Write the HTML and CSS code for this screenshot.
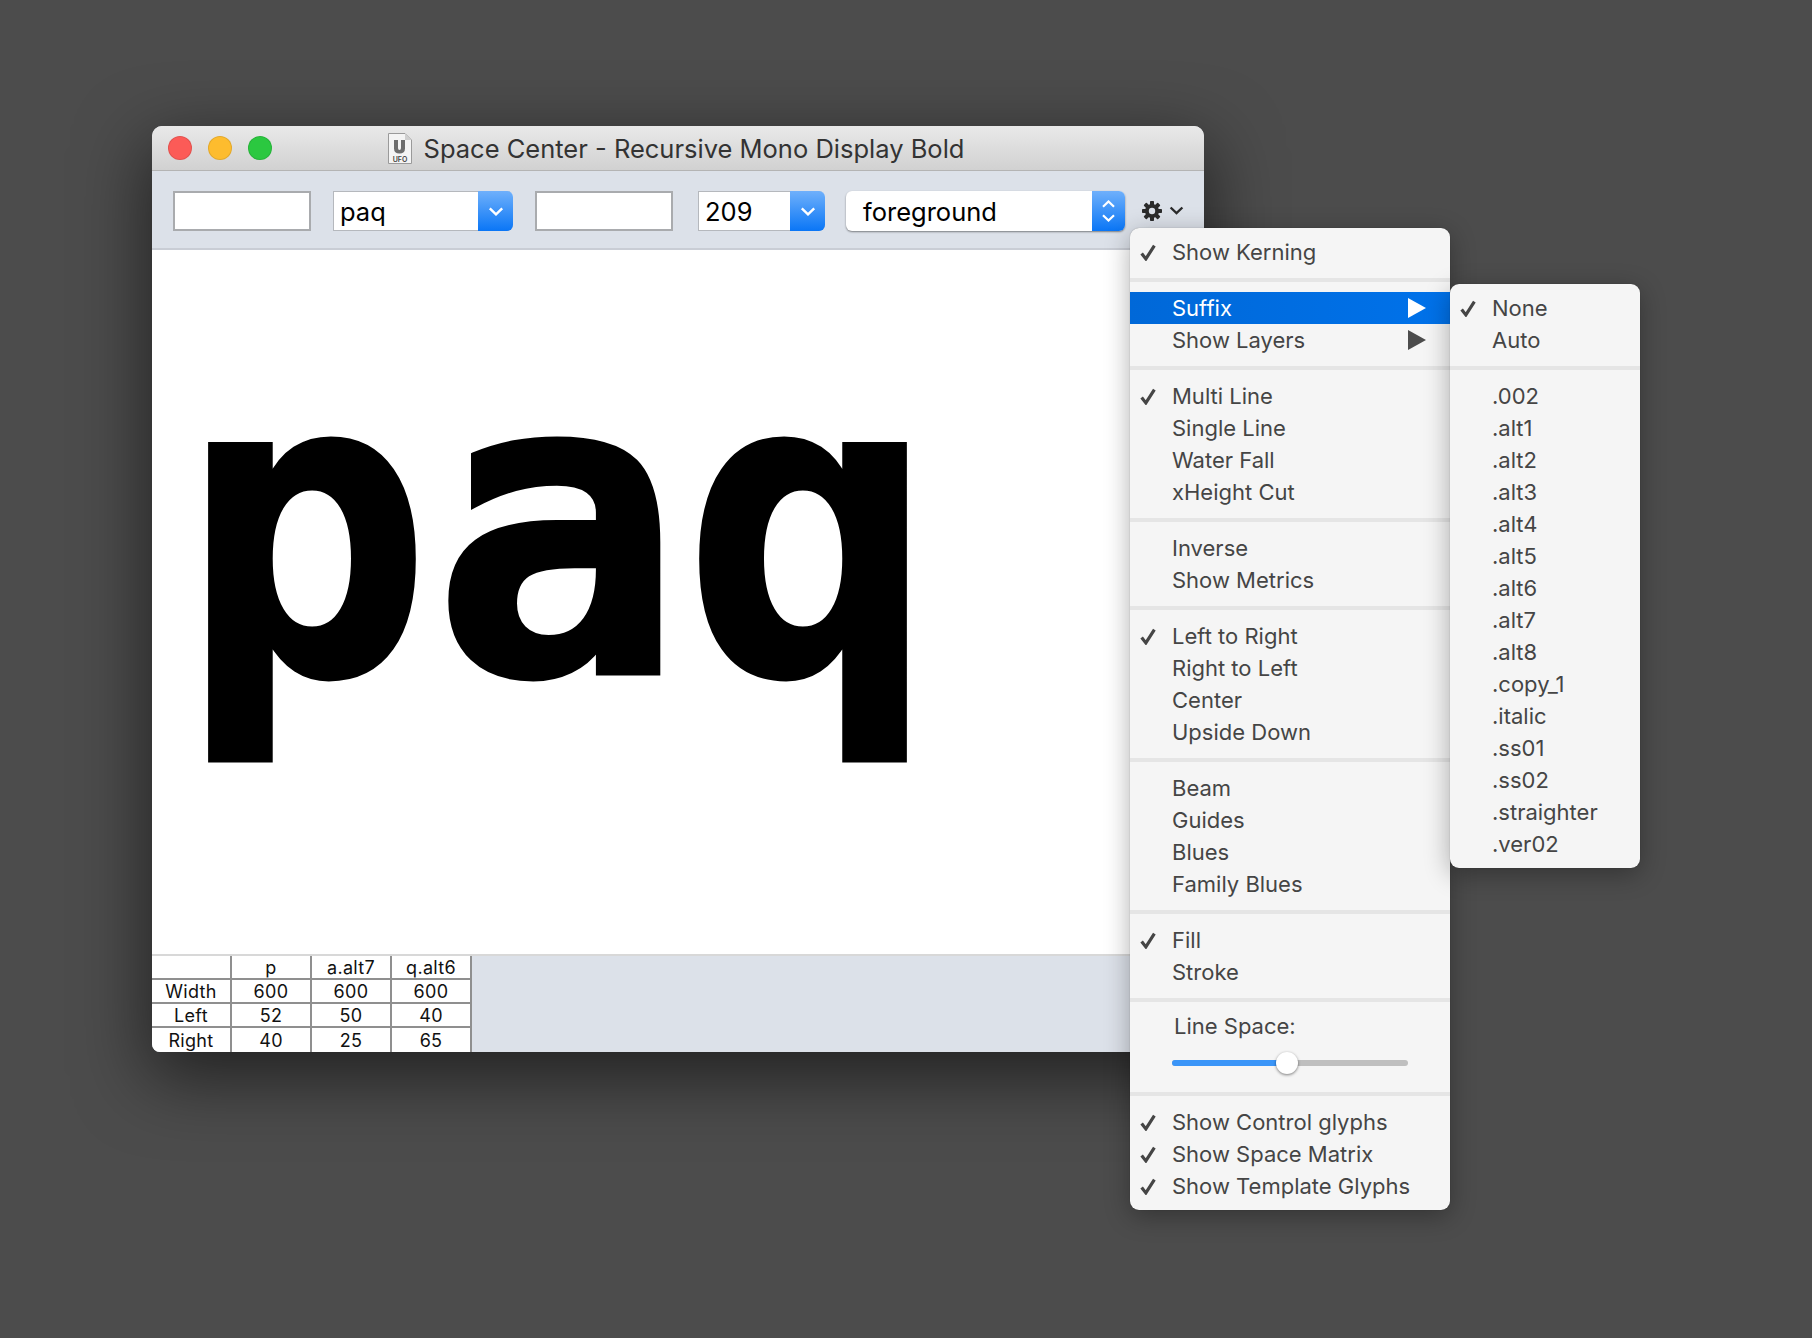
FILE: index.html
```html
<!DOCTYPE html>
<html>
<head>
    <title>Space Center - Recursive Mono Display Bold</title>
    <meta charset="UTF-8">
    <link rel="stylesheet" href="styles.css">
</head>
<body>
    <svg class="defs" width="0" height="0">
        <symbol id="check" viewBox="0 0 15 16">
            <path d="M1.5 9 L5.5 14 L13.5 1.5" fill="none" stroke="currentColor" stroke-width="3"/>
        </symbol>
        <symbol id="chevron" viewBox="0 0 14 8">
            <path d="M1.5 1.2 L7 6.5 L12.5 1.2" fill="none" stroke="currentColor" stroke-width="2.2"/>
        </symbol>
    </svg>

    <div class="window">
        <div class="titlebar">
            <div class="lights">
                <span class="light red"></span>
                <span class="light yellow"></span>
                <span class="light green"></span>
            </div>
            <div class="title">
                <svg class="ufo-icon" viewBox="0 0 24 31" width="24" height="31">
                    <path d="M0.5 0.5 H17 L23.5 7 V30.5 H0.5 Z" fill="#f4f4f4" stroke="#9a9a9a"/>
                    <path d="M17 0.5 V7 H23.5 Z" fill="#cfcfcf"/>
                    <path d="M6 7 H10 V15 Q10 17 11.5 17 Q13 17 13 15 V7 H17 V15.5 Q17 20.5 11.5 20.5 Q6 20.5 6 15.5 Z" fill="#6d6d6d"/>
                    <text x="12" y="28.5" text-anchor="middle" class="ufo-label">UFO</text>
                </svg>
                <span>Space Center - Recursive Mono Display Bold</span>
            </div>
        </div>

        <div class="toolbar">
            <div class="field"></div>
            <div class="combo combo-wide">
                <span class="combo-text">paq</span>
                <span class="combo-btn"><svg width="16" height="9"><use href="#chevron"/></svg></span>
            </div>
            <div class="field"></div>
            <div class="combo combo-small">
                <span class="combo-text">209</span>
                <span class="combo-btn"><svg width="16" height="9"><use href="#chevron"/></svg></span>
            </div>
            <div class="popup">
                <span class="popup-text">foreground</span>
                <span class="popup-btn">
                    <svg class="flip" width="15" height="8"><use href="#chevron"/></svg>
                    <svg width="15" height="8"><use href="#chevron"/></svg>
                </span>
            </div>
            <div class="gear-btn">
                <svg width="20" height="20" viewBox="0 0 20 20">
                    <g fill="#2b2b2b">
                        <rect x="8" y="0" width="4" height="20" rx="0.8"/>
                        <rect x="8" y="0" width="4" height="20" rx="0.8" transform="rotate(45 10 10)"/>
                        <rect x="8" y="0" width="4" height="20" rx="0.8" transform="rotate(90 10 10)"/>
                        <rect x="8" y="0" width="4" height="20" rx="0.8" transform="rotate(135 10 10)"/>
                        <circle cx="10" cy="10" r="7"/>
                    </g>
                    <circle cx="10" cy="10" r="3.2" fill="#dce1e9"/>
                </svg>
                <svg class="gear-chevron" width="15" height="9"><use href="#chevron"/></svg>
            </div>
        </div>

        <div class="canvas">
            <div class="preview">paq</div>
        </div>

        <div class="bottom">
            <table class="matrix">
                <tr><td></td><td>p</td><td>a.alt7</td><td>q.alt6</td></tr>
                <tr><td>Width</td><td>600</td><td>600</td><td>600</td></tr>
                <tr><td>Left</td><td>52</td><td>50</td><td>40</td></tr>
                <tr><td>Right</td><td>40</td><td>25</td><td>65</td></tr>
            </table>
        </div>
    </div>

    <div class="menu main-menu">
        <div class="item"><svg class="check"><use href="#check"/></svg>Show Kerning</div>
        <div class="sep"></div>
        <div class="item active">Suffix<span class="arrow"></span></div>
        <div class="item">Show Layers<span class="arrow"></span></div>
        <div class="sep"></div>
        <div class="item"><svg class="check"><use href="#check"/></svg>Multi Line</div>
        <div class="item">Single Line</div>
        <div class="item">Water Fall</div>
        <div class="item">xHeight Cut</div>
        <div class="sep"></div>
        <div class="item">Inverse</div>
        <div class="item">Show Metrics</div>
        <div class="sep"></div>
        <div class="item"><svg class="check"><use href="#check"/></svg>Left to Right</div>
        <div class="item">Right to Left</div>
        <div class="item">Center</div>
        <div class="item">Upside Down</div>
        <div class="sep"></div>
        <div class="item">Beam</div>
        <div class="item">Guides</div>
        <div class="item">Blues</div>
        <div class="item">Family Blues</div>
        <div class="sep"></div>
        <div class="item"><svg class="check"><use href="#check"/></svg>Fill</div>
        <div class="item">Stroke</div>
        <div class="sep"></div>
        <div class="slider-box">
            <div class="slider-label">Line Space:</div>
            <div class="slider">
                <span class="slider-fill"></span>
                <span class="slider-knob"></span>
            </div>
        </div>
        <div class="sep"></div>
        <div class="item"><svg class="check"><use href="#check"/></svg>Show Control glyphs</div>
        <div class="item"><svg class="check"><use href="#check"/></svg>Show Space Matrix</div>
        <div class="item"><svg class="check"><use href="#check"/></svg>Show Template Glyphs</div>
    </div>

    <div class="menu sub-menu">
        <div class="item"><svg class="check"><use href="#check"/></svg>None</div>
        <div class="item">Auto</div>
        <div class="sep"></div>
        <div class="item">.002</div>
        <div class="item">.alt1</div>
        <div class="item">.alt2</div>
        <div class="item">.alt3</div>
        <div class="item">.alt4</div>
        <div class="item">.alt5</div>
        <div class="item">.alt6</div>
        <div class="item">.alt7</div>
        <div class="item">.alt8</div>
        <div class="item">.copy_1</div>
        <div class="item">.italic</div>
        <div class="item">.ss01</div>
        <div class="item">.ss02</div>
        <div class="item">.straighter</div>
        <div class="item">.ver02</div>
    </div>
</body>
</html>
```

FILE: styles.css
```css
html, body {
    margin: 0;
    height: 100%;
}
body {
    background-color: #4c4c4c;
    font-family: Inter, "Noto Sans", sans-serif;
    overflow: hidden;
}
.defs {
    position: absolute;
}

/* window */
.window {
    position: absolute;
    left: 152px;
    top: 126px;
    width: 1052px;
    height: 926px;
    display: flex;
    flex-direction: column;
    border-radius: 10px 10px 8px 8px;
    overflow: hidden;
    background-color: #dce1e9;
    box-shadow: 0 22px 70px 4px rgba(0,0,0,0.56);
}
.titlebar {
    height: 44px;
    flex: none;
    display: grid;
    grid-template-columns: 1fr auto 1fr;
    align-items: center;
    padding: 0 16px;
    background: linear-gradient(#e9e9e9, #d1d1d1);
    border-bottom: 1px solid #b4b4b4;
}
.lights {
    display: flex;
    gap: 16px;
}
.light {
    width: 24px;
    height: 24px;
    border-radius: 50%;
    box-sizing: border-box;
    border: 1px solid rgba(0,0,0,0.1);
}
.red { background-color: #fc5b57; }
.yellow { background-color: #fdbc2e; }
.green { background-color: #2bc840; }
.title {
    display: flex;
    align-items: center;
    gap: 12px;
    margin-right: 4px;
    font-size: 25.5px;
    color: #333;
    white-space: nowrap;
}
.title span {
    padding-top: 1px;
}
.ufo-icon {
    flex: none;
}
.ufo-label {
    font-size: 7px;
    font-weight: 600;
    fill: #444;
}

/* toolbar */
.toolbar {
    height: 79px;
    flex: none;
    box-sizing: border-box;
    display: flex;
    align-items: center;
    gap: 22px;
    padding: 3px 0 0 21px;
    border-bottom: 2px solid #c9cdd5;
    font-size: 25.5px;
    color: #000;
}
.field {
    width: 138px;
    height: 40px;
    box-sizing: border-box;
    background-color: #fff;
    border: 2px solid #a9abae;
}
.combo {
    height: 40px;
    display: flex;
    background-color: #fff;
    border-radius: 0 6px 6px 0;
    box-shadow: inset 2px 2px 0 -1px #b5b8bd, inset 0 -1px 0 #b5b8bd;
}
.combo-wide { width: 180px; }
.combo-small { width: 127px; margin-left: 3px; margin-right: -1px; }
.combo-text {
    flex: 1;
    padding-left: 7px;
    line-height: 42px;
}
.combo-btn, .popup-btn {
    width: 35px;
    display: flex;
    flex-direction: column;
    align-items: center;
    justify-content: center;
    color: #fff;
    background: linear-gradient(#6fb0fb, #0a76f6);
    border-radius: 0 6px 6px 0;
}
.popup {
    width: 279px;
    height: 40px;
    display: flex;
    background-color: #fff;
    border-radius: 6px;
    box-shadow: 0 1px 2px rgba(0,0,0,0.45);
}
.popup-text {
    flex: 1;
    padding-left: 17px;
    line-height: 41px;
}
.popup-btn {
    width: 33px;
    gap: 6px;
}
.flip {
    transform: scaleY(-1);
}
.gear-btn {
    display: flex;
    align-items: center;
    gap: 7px;
    margin-left: -5px;
    margin-top: -1px;
    color: #2b2b2b;
}

/* glyph view */
.canvas {
    flex: 1;
    background-color: #fff;
    border-bottom: 2px solid #d8d8d8;
    overflow: hidden;
}
.preview {
    padding-left: 28px;
    font-family: "DejaVu Sans Mono", monospace;
    font-weight: bold;
    font-size: 418px;
    line-height: 1;
    margin-top: 70px;
    color: #000;
    -webkit-text-stroke: 5px #000;
}
.bottom {
    height: 96px;
    flex: none;
}
.matrix {
    border-collapse: separate;
    border-spacing: 0;
    table-layout: fixed;
    width: 320px;
    background-color: #fff;
}
.matrix td {
    width: 78px;
    height: 21px;
    padding: 1px 0 0;
    border-right: 2px solid #8f8f8f;
    border-bottom: 2px solid #8f8f8f;
    text-align: center;
    font-size: 18px;
    letter-spacing: 0.3px;
    line-height: 21px;
    color: #111;
}
.matrix tr:last-child td {
    border-bottom: none;
    height: 23px;
}

/* menus */
.menu {
    position: absolute;
    box-sizing: border-box;
    padding: 8px 0;
    background-color: #f5f5f5;
    border-radius: 9px;
    box-shadow: 0 6px 26px rgba(0,0,0,0.32), 0 0 1px rgba(0,0,0,0.4);
    color: #454545;
    font-size: 22px;
}
.main-menu {
    left: 1130px;
    top: 228px;
    width: 320px;
}
.sub-menu {
    left: 1450px;
    top: 284px;
    width: 190px;
}
.item {
    position: relative;
    height: 32px;
    line-height: 32px;
    padding-left: 42px;
    white-space: nowrap;
}
.check {
    position: absolute;
    left: 10px;
    top: 8px;
    width: 16px;
    height: 17px;
}
.active {
    background: linear-gradient(90deg, #0068d8, #0072ea);
    color: #fff;
}
.arrow {
    position: absolute;
    left: 278px;
    top: 6px;
    border-left: 18px solid #4c4c4c;
    border-top: 10px solid transparent;
    border-bottom: 10px solid transparent;
}
.active .arrow {
    border-left-color: #fff;
}
.sep {
    height: 4px;
    margin: 10px 0;
    background-color: #e5e5e5;
}
.slider-box {
    height: 70px;
    padding-left: 44px;
    box-sizing: border-box;
}
.slider-label {
    height: 28px;
    line-height: 28px;
}
.slider {
    position: relative;
    width: 236px;
    height: 6px;
    margin: 20px 0 0 -2px;
    border-radius: 3px;
    background-color: #bfbfbf;
}
.slider-fill {
    display: block;
    width: 115px;
    height: 6px;
    border-radius: 3px 0 0 3px;
    background-color: #3a95f8;
}
.slider-knob {
    position: absolute;
    left: 104px;
    top: -8px;
    width: 22px;
    height: 22px;
    border-radius: 50%;
    background-color: #fff;
    box-shadow: 0 1px 3px rgba(0,0,0,0.5);
}
```
